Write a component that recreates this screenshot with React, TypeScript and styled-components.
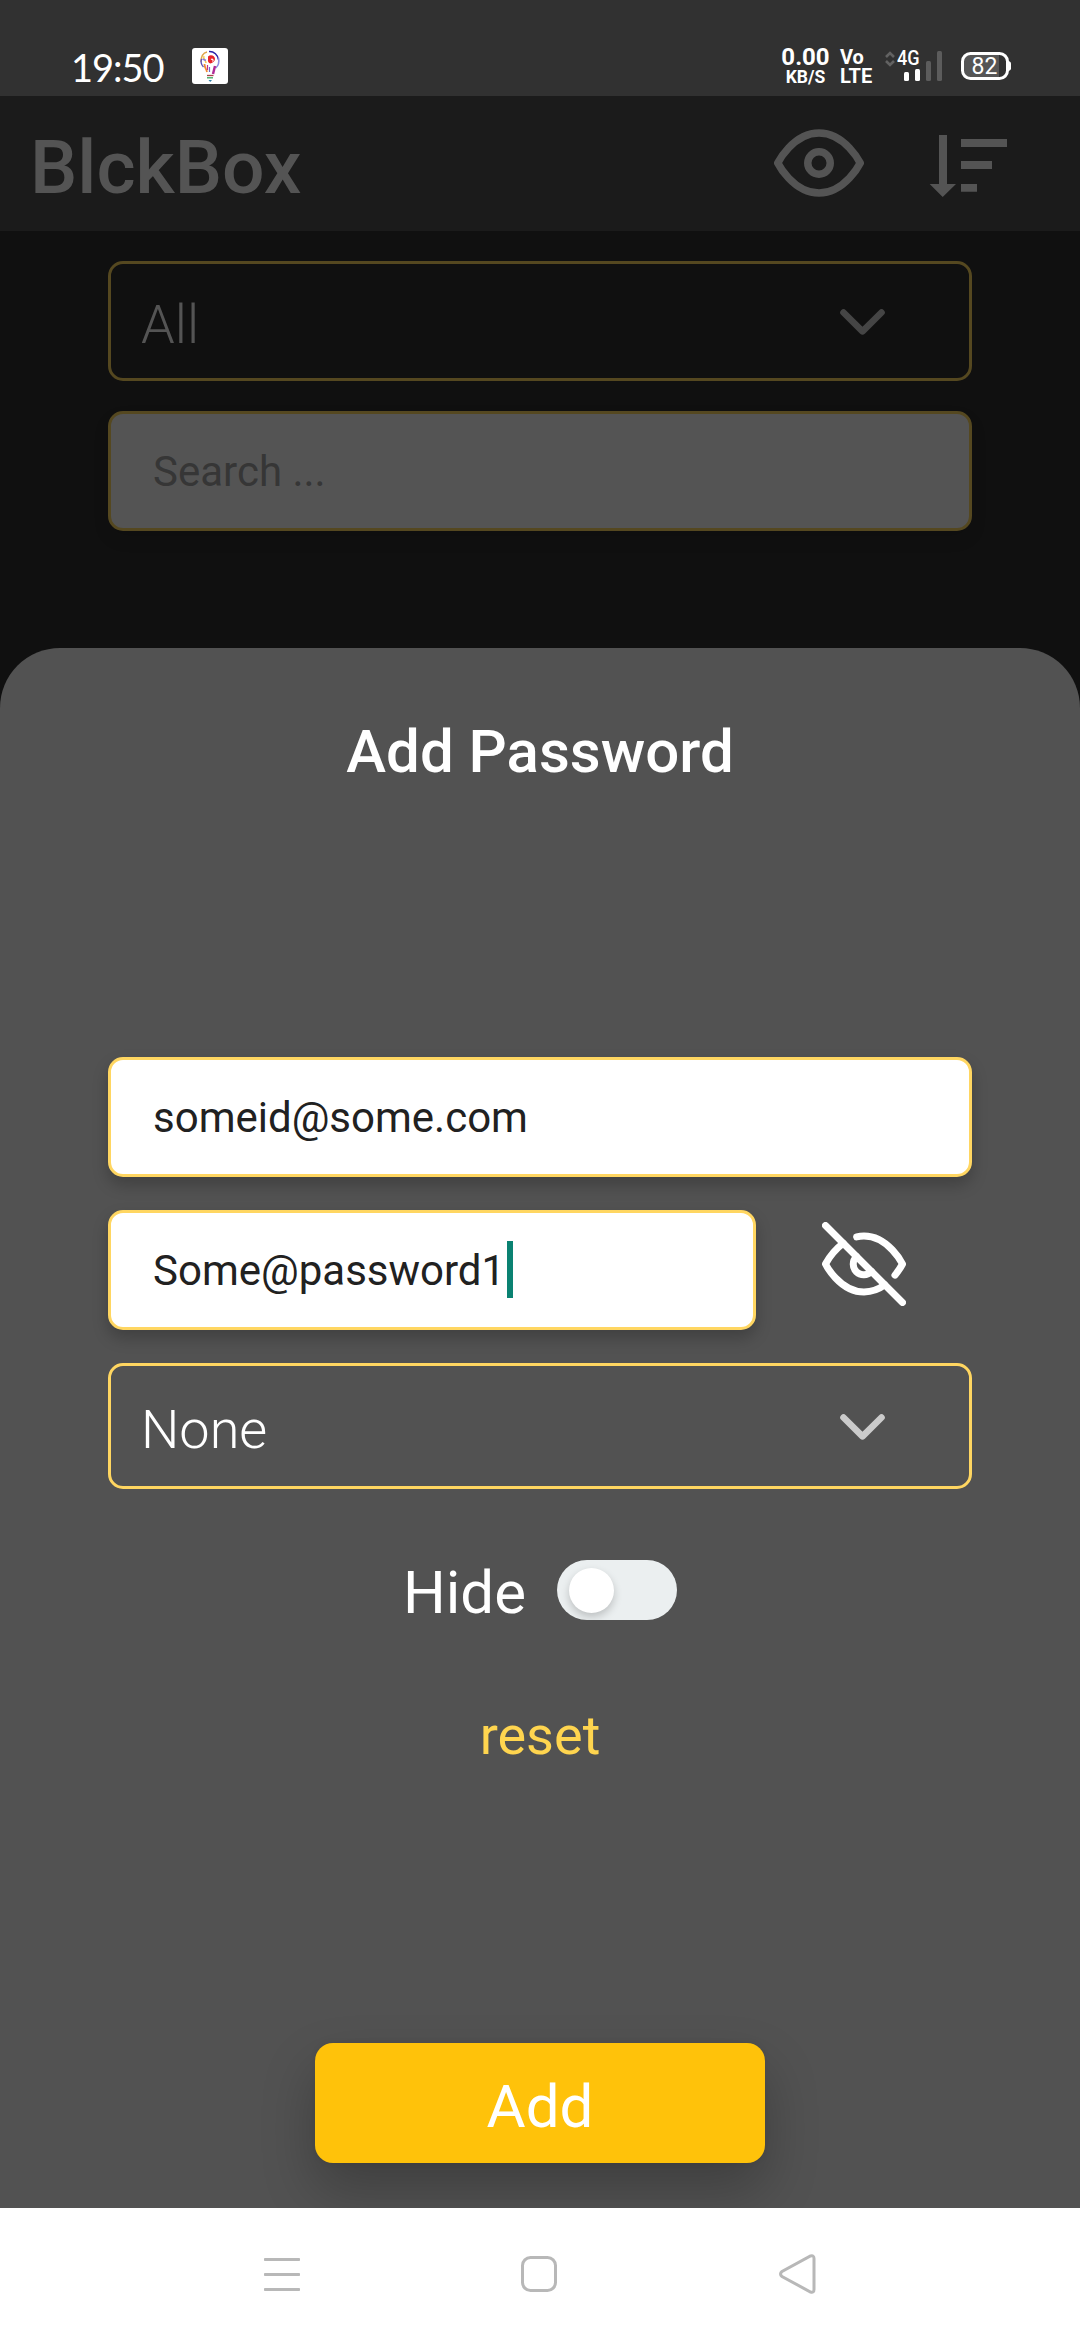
import React from "react";
import styled, { createGlobalStyle } from "styled-components";

const Global = createGlobalStyle`
  * { box-sizing: border-box; }
  body { margin: 0; background: #101010; font-family: Roboto, "Noto Sans", sans-serif; }
  button { font-family: inherit; border: 0; padding: 0; background: none; }
  svg { display: block; flex: none; }
`;

const Screen = styled.div`
  width: 1080px;
  height: 2340px;
  display: flex;
  flex-direction: column;
  background: #101010;
  overflow: hidden;
`;

const StatusBar = styled.div`
  height: 96px;
  flex: none;
  display: flex;
  align-items: flex-start;
  justify-content: space-between;
  padding: 48px 69px 0 71px;
  background: #313131;
  color: #fff;
`;

const StatusGroup = styled.div`
  display: flex;
  align-items: flex-start;
`;

const Clock = styled.span`
  width: 121px;
  font-family: Lato, sans-serif;
  font-size: 38px;
  line-height: 39px;
  letter-spacing: -1px;
`;

const StackedLabel = styled.div<{ $width: number; $gap: number }>`
  width: ${(p) => p.$width}px;
  margin-right: ${(p) => p.$gap}px;
  display: flex;
  flex-direction: column;
  align-items: center;
  font-weight: 700;
`;

const LabelLine = styled.span<{ $size: number; $height: number; $start?: boolean }>`
  font-size: ${(p) => p.$size}px;
  line-height: ${(p) => p.$height}px;
  align-self: ${(p) => (p.$start ? "flex-start" : "center")};
  white-space: nowrap;
`;

const Signal = styled.div`
  width: 57px;
  height: 36px;
  margin-right: 19px;
  position: relative;
`;

const NetworkType = styled.span`
  position: absolute;
  left: 12px;
  top: 0;
  font-size: 21px;
  line-height: 21px;
  font-weight: 500;
  transform: scaleX(0.86);
  transform-origin: left;
`;

const Battery = styled.div`
  width: 50px;
  height: 28px;
  margin-top: 4px;
  position: relative;
`;

const BatteryLevel = styled.span`
  position: absolute;
  left: 0;
  top: 0;
  width: 47px;
  text-align: center;
  font-size: 23px;
  line-height: 29px;
`;

const Header = styled.header`
  height: 135px;
  flex: none;
  display: flex;
  align-items: center;
  justify-content: space-between;
  padding: 0 72px 0 30px;
  background: #1b1b1b;
  color: #545454;
`;

const AppName = styled.h1`
  margin: 0;
  padding-top: 6px;
  font-size: 75px;
  line-height: 88px;
  font-weight: 500;
`;

const HeaderActions = styled.div`
  display: flex;
  align-items: center;
  gap: 64px;
  margin-bottom: 1px;
`;

const Filters = styled.section`
  height: 417px;
  flex: none;
  display: flex;
  flex-direction: column;
  gap: 30px;
  padding: 30px 108px 0;
`;

const Select = styled.div<{ $height: number; $dimmed?: boolean }>`
  height: ${(p) => p.$height}px;
  display: flex;
  align-items: center;
  justify-content: space-between;
  padding: 0 84px 0 30px;
  border: 3px solid ${(p) => (p.$dimmed ? "#554820" : "#ffd661")};
  border-radius: 15px;
  color: ${(p) => (p.$dimmed ? "#545454" : "#ffffff")};
`;

const SelectValue = styled.span`
  padding-top: 7px;
  font-size: 54px;
  line-height: 64px;
  font-weight: 300;
`;

const Field = styled.div<{ $width?: number; $dimmed?: boolean }>`
  width: ${(p) => (p.$width ? `${p.$width}px` : "100%")};
  height: 120px;
  display: flex;
  align-items: center;
  padding: 2px 42px 0;
  border: 3px solid ${(p) => (p.$dimmed ? "#554820" : "#ffd661")};
  border-radius: 15px;
  background: ${(p) => (p.$dimmed ? "#545454" : "#ffffff")};
  color: ${(p) => (p.$dimmed ? "#363636" : "#212121")};
  font-size: 42px;
  line-height: 50px;
  box-shadow: 0 8px 16px ${(p) => (p.$dimmed ? "rgba(0,0,0,.1)" : "rgba(0,0,0,.22)")};
`;

const Caret = styled.span`
  width: 6px;
  height: 57px;
  margin: 0 0 4px 2px;
  background: #0a8272;
`;

const Sheet = styled.main`
  height: 1560px;
  flex: none;
  display: flex;
  flex-direction: column;
  align-items: center;
  padding: 69px 108px 0;
  border-radius: 60px 60px 0 0;
  background: #525252;
  color: #fff;
  overflow: hidden;
`;

const SheetTitle = styled.h2`
  margin: 0 0 270px;
  font-size: 60px;
  line-height: 70px;
  font-weight: 500;
`;

const Form = styled.div`
  width: 100%;
  display: flex;
  flex-direction: column;
  gap: 33px;
`;

const PasswordRow = styled.div`
  display: flex;
  align-items: flex-start;
  gap: 66px;
`;

const RevealButton = styled.button`
  margin-top: 12px;
  color: #fff;
`;

const HideRow = styled.div`
  margin-top: 71px;
  height: 60px;
  display: flex;
  align-items: center;
  gap: 31px;
`;

const HideLabel = styled.span`
  padding-top: 5px;
  font-size: 60px;
  line-height: 70px;
`;

const Toggle = styled.div`
  width: 120px;
  height: 60px;
  display: flex;
  align-items: flex-start;
  padding: 8px 12px;
  border-radius: 30px;
  background: #ebeff0;
  overflow: hidden;
`;

const Knob = styled.div`
  width: 45px;
  height: 45px;
  border-radius: 50%;
  background: #fff;
  box-shadow: 0 4px 8px rgba(0, 0, 0, 0.2);
`;

const ResetButton = styled.button`
  margin-top: 84px;
  color: #ffd54f;
  font-size: 54px;
  line-height: 64px;
`;

const AddButton = styled.button`
  width: 450px;
  height: 120px;
  margin-top: 275px;
  padding-top: 7px;
  border-radius: 18px;
  background: #ffc20a;
  color: #fff;
  font-size: 60px;
  line-height: 70px;
  box-shadow: 0 26px 54px rgba(0, 0, 0, 0.24), 0 0 6px rgba(0, 0, 0, 0.08);
`;

const NavBar = styled.nav`
  height: 132px;
  flex: none;
  display: flex;
  justify-content: space-between;
  align-items: center;
  padding: 0 264px;
  background: #fff;
  color: #b8b8b8;
`;

const BulbIcon = () => (
  <svg width="36" height="36" viewBox="0 0 36 36" fill="none">
    <rect width="36" height="36" rx="3" fill="#fff" />
    <path d="M9 14C9 9 11 5 15 4" stroke="#e0a44a" strokeWidth="1.3" />
    <path d="M17 3.500c5-.3 9 3.500 9.300 8" stroke="#2a22a8" strokeWidth="1.500" />
    <path d="M26.500 10c.8 4-.4 8-2.800 10" stroke="#8d8ae0" strokeWidth="1.600" />
    <path d="M9.500 11c-1 3 0 6 2 8" stroke="#5a4fb4" strokeWidth="1.400" />
    <path d="M12 8c-1.500 3 2 4 2 7" stroke="#f5cf55" strokeWidth="1.600" />
    <path d="M10.500 11l3.500 1.500" stroke="#8c7bdc" strokeWidth="1.600" />
    <path d="M16 8.500c3-2.500 7-.5 7 2.500 0 2-2 4-4.500 4.500-2-.5-3-2-2.500-4z" fill="#e8252b" />
    <path d="M19 11.500c1.500-1 3 .5 1.500 2" stroke="#fff" strokeWidth="1.100" />
    <path d="M12.500 16c0 4 2 5 2.500 8" stroke="#f08a35" strokeWidth="1.800" />
    <path d="M15.500 17v5" stroke="#c4308a" strokeWidth="1.200" />
    <path d="M17.500 19v5" stroke="#6f66c9" strokeWidth="1.200" />
    <path d="M23 18l-2 8" stroke="#b02a96" strokeWidth="2.400" />
    <path d="M15 27.500h6.500" stroke="#a8444a" strokeWidth="1.300" />
    <path d="M15 29.800h6" stroke="#39a85b" strokeWidth="1.300" />
    <path d="M16.500 32h3.500l-1.800 2z" fill="#2e7fa8" />
  </svg>
);

const SignalIcon = () => (
  <svg width="57" height="36" viewBox="0 0 57 36">
    <path d="M1 9l4-4 4 4M1 13l4 4 4-4" fill="none" stroke="#626262" strokeWidth="2.600" />
    <rect x="19" y="24" width="5" height="9" rx="1.500" fill="#fff" />
    <rect x="30" y="21" width="5" height="12" rx="1.500" fill="#fff" />
    <rect x="41" y="13" width="5" height="20" rx="1.500" fill="#5c5c5c" />
    <rect x="52" y="3" width="5" height="30" rx="1.500" fill="#5c5c5c" />
  </svg>
);

const BatteryIcon = () => (
  <svg width="50" height="28" viewBox="0 0 50 28">
    <path d="M9 3h29v22H9a6 6 0 0 1-6-6V9a6 6 0 0 1 6-6z" fill="#555" />
    <rect x="1.500" y="1.500" width="45" height="25" rx="8" fill="none" stroke="#fff" strokeWidth="3" />
    <path d="M46 8.500q4 1 4 3v5q0 2-4 3z" fill="#fff" />
  </svg>
);

const EyeIcon = () => (
  <svg width="90" height="90" viewBox="0 0 24 24" fill="none" stroke="currentColor" strokeWidth="2" strokeLinecap="round" strokeLinejoin="round">
    <path d="M1 12s4-8 11-8 11 8 11 8-4 8-11 8-11-8-11-8z" />
    <circle cx="12" cy="12" r="3" />
  </svg>
);

const EyeOffIcon = () => (
  <svg width="84" height="84" viewBox="0 0 24 24" fill="none" stroke="currentColor" strokeWidth="2" strokeLinecap="round" strokeLinejoin="round">
    <path d="M17.94 17.94A10.07 10.07 0 0 1 12 20c-7 0-11-8-11-8a18.45 18.45 0 0 1 5.06-5.94M9.9 4.24A9.12 9.12 0 0 1 12 4c7 0 11 8 11 8a18.5 18.5 0 0 1-2.16 3.19m-6.72-1.07a3 3 0 1 1-4.24-4.24" />
    <path d="M1 1l22 22" />
  </svg>
);

const SortGlyph = styled.svg`
  margin-top: 5px;
`;

const SortIcon = () => (
  <SortGlyph width="80" height="62" viewBox="0 0 80 62" fill="currentColor">
    <path d="M11 0h8v49h9L14.700 62 1.700 49H11z" />
    <path d="M33 4h46v8H33zM33 26h31v8H33zM33 49h16v7.700H33z" />
  </SortGlyph>
);

const ChevronGlyph = styled.svg`
  margin-top: 2px;
`;

const Chevron = ({ color }: { color: string }) => (
  <ChevronGlyph width="45" height="26" viewBox="0 0 45 26" fill="none" stroke={color} strokeWidth="6.600" strokeLinecap="round" strokeLinejoin="round">
    <path d="M3.500 3.500L22.500 22.300 41.500 3.500" />
  </ChevronGlyph>
);

const RecentsIcon = () => (
  <svg width="36" height="40" viewBox="0 0 36 40" fill="currentColor">
    <rect y="4" width="36" height="3" rx=".8" />
    <rect y="19" width="36" height="3" rx=".8" />
    <rect y="34" width="36" height="3" rx=".8" />
  </svg>
);

const HomeIcon = () => (
  <svg width="36" height="36" viewBox="0 0 36 36" fill="none" stroke="currentColor" strokeWidth="3">
    <rect x="1.500" y="1.500" width="33" height="33" rx="8" />
  </svg>
);

const BackIcon = () => (
  <svg width="38" height="40" viewBox="0 0 38 40" fill="none" stroke="currentColor" strokeWidth="3">
    <path d="M36 4.500v31q0 3.500-3.500 2.500L4 22.500q-3-2.500 0-5L32.500 2Q36 1 36 4.500z" />
  </svg>
);

export default function App() {
  return (
    <Screen>
      <Global />
      <StatusBar>
        <StatusGroup>
          <Clock>19:50</Clock>
          <BulbIcon />
        </StatusGroup>
        <StatusGroup>
          <StackedLabel $width={47} $gap={11}>
            <LabelLine $size={24} $height={19}>0.00</LabelLine>
            <LabelLine $size={17.5} $height={20}>KB/S</LabelLine>
          </StackedLabel>
          <StackedLabel $width={34} $gap={11}>
            <LabelLine $size={20} $height={18} $start>Vo</LabelLine>
            <LabelLine $size={20} $height={20} $start>LTE</LabelLine>
          </StackedLabel>
          <Signal>
            <SignalIcon />
            <NetworkType>4G</NetworkType>
          </Signal>
          <Battery>
            <BatteryIcon />
            <BatteryLevel>82</BatteryLevel>
          </Battery>
        </StatusGroup>
      </StatusBar>

      <Header>
        <AppName>BlckBox</AppName>
        <HeaderActions>
          <EyeIcon />
          <SortIcon />
        </HeaderActions>
      </Header>

      <Filters>
        <Select $height={120} $dimmed>
          <SelectValue>All</SelectValue>
          <Chevron color="#454545" />
        </Select>
        <Field $dimmed>Search ...</Field>
      </Filters>

      <Sheet>
        <SheetTitle>Add Password</SheetTitle>
        <Form>
          <Field>someid@some.com</Field>
          <PasswordRow>
            <Field $width={648}>
              Some@password1
              <Caret />
            </Field>
            <RevealButton aria-label="Show password">
              <EyeOffIcon />
            </RevealButton>
          </PasswordRow>
          <Select $height={126}>
            <SelectValue>None</SelectValue>
            <Chevron color="#cbcbcb" />
          </Select>
        </Form>
        <HideRow>
          <HideLabel>Hide</HideLabel>
          <Toggle>
            <Knob />
          </Toggle>
        </HideRow>
        <ResetButton>reset</ResetButton>
        <AddButton>Add</AddButton>
      </Sheet>

      <NavBar>
        <RecentsIcon />
        <HomeIcon />
        <BackIcon />
      </NavBar>
    </Screen>
  );
}
